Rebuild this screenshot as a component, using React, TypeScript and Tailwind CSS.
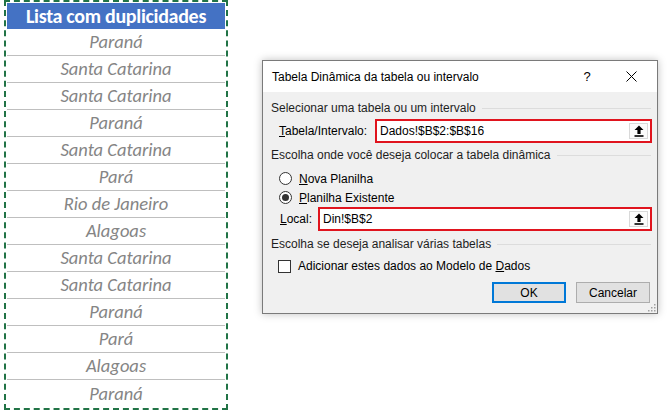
import React from "react";

const cities = [
  "Paraná",
  "Santa Catarina",
  "Santa Catarina",
  "Paraná",
  "Santa Catarina",
  "Pará",
  "Rio de Janeiro",
  "Alagoas",
  "Santa Catarina",
  "Santa Catarina",
  "Paraná",
  "Pará",
  "Alagoas",
  "Paraná",
];

const ui = { fontFamily: '"Segoe UI", "Liberation Sans", Arial, sans-serif' };
const sheet = { fontFamily: 'Calibri, Lato, "Liberation Sans", sans-serif' };

function UploadIcon() {
  return (
    <svg width="10" height="12" viewBox="0 0 10 12">
      <path d="M5 0.5 L9.5 5 H6.6 V9 H3.4 V5 H0.5 Z" fill="#000" />
      <rect x="0.5" y="10.2" width="9" height="1.6" fill="#000" />
    </svg>
  );
}

function RangeField({ value, width }: { value: string; width: string }) {
  return (
    <div className={`${width} h-[24px] border-2 border-[#e0141e] bg-white flex items-center`}>
      <div className="flex-1 pl-[3px] text-[12px] text-black leading-none">{value}</div>
      <div className="w-[19px] h-[16px] mr-[2px] border border-[#d9d9d9] bg-[#fbfbfb] flex items-center justify-center">
        <UploadIcon />
      </div>
    </div>
  );
}

function GroupTitle({ children }: { children: React.ReactNode }) {
  return (
    <div className="flex items-center gap-[6px] pr-[6px] h-[16px]">
      <span className="text-[12px] text-[#1e1e1e] whitespace-nowrap">{children}</span>
      <div className="flex-1 h-px bg-[#dcdcdc]" />
    </div>
  );
}

function Radio({ checked, children }: { checked?: boolean; children: React.ReactNode }) {
  return (
    <div className="flex items-center gap-[7px] h-[19px] pl-[8px]">
      <div className="w-[13px] h-[13px] rounded-full border border-[#333] bg-white flex items-center justify-center">
        {checked && <div className="w-[7px] h-[7px] rounded-full bg-[#333]" />}
      </div>
      <span className="text-[12px] text-black">{children}</span>
    </div>
  );
}

function SizeGrip() {
  const dots = [
    [8, 2],
    [5, 5],
    [8, 5],
    [2, 8],
    [5, 8],
    [8, 8],
  ];
  return (
    <svg width="10" height="10" viewBox="0 0 10 10">
      {dots.map(([x, y], i) => (
        <rect key={i} x={x} y={y} width="1.5" height="1.5" fill="#a0a0a0" />
      ))}
    </svg>
  );
}

export default function App() {
  return (
    <div className="w-[668px] h-[414px] bg-white flex items-start overflow-hidden">
      {/* Spreadsheet column */}
      <div
        className="ml-[4px] w-[224px] border-2 border-dashed border-[#217346] p-px flex flex-col"
        style={sheet}
      >
        <div className="h-[26px] bg-[#4472c4] flex items-center justify-center text-white font-bold text-[20px] tracking-[-0.3px] leading-none pb-[1px]">
          Lista com duplicidades
        </div>
        {cities.map((c, i) => (
          <div
            key={i}
            className={`h-[27px] flex items-center justify-center italic text-[18.5px] text-[#858585] ${
              i < cities.length - 1 ? "border-b border-[#bfbfbf]" : ""
            }`}
          >
            {c}
          </div>
        ))}
      </div>

      {/* PivotTable dialog */}
      <div
        className="relative ml-[34px] mt-[60px] w-[396px] h-[254px] border border-[#7a7a7a] bg-[#f0f0f0] flex flex-col shadow-[0_0_8px_rgba(0,0,0,0.25)]"
        style={ui}
      >
        <div className="h-[31px] bg-white flex items-center pl-[9px] text-[12px] text-black">
          <span className="flex-1">Tabela Dinâmica da tabela ou intervalo</span>
          <span className="w-[20px] text-center text-[13px] mr-[29px]">?</span>
          <svg width="11" height="11" viewBox="0 0 11 11" className="mr-[20px]">
            <path d="M0.5 0.5 L10.5 10.5 M10.5 0.5 L0.5 10.5" stroke="#000" strokeWidth="1" />
          </svg>
        </div>

        <div className="flex flex-col pl-[8px] pt-[8px]">
          <GroupTitle>Selecionar uma tabela ou um intervalo</GroupTitle>
          <div className="flex items-center mt-[3px] pl-[8px]">
            <span className="w-[96px] text-[12px] text-black">
              <span className="underline">T</span>abela/Intervalo:
            </span>
            <RangeField value="Dados!$B$2:$B$16" width="w-[277px]" />
          </div>

          <div className="mt-[4px]">
            <GroupTitle>Escolha onde você deseja colocar a tabela dinâmica</GroupTitle>
          </div>
          <div className="mt-[6px]">
            <Radio>
              <span className="underline">N</span>ova Planilha
            </Radio>
            <Radio checked>
              <span className="underline">P</span>lanilha Existente
            </Radio>
          </div>
          <div className="flex items-center pl-[9px]">
            <span className="w-[38px] text-[12px] text-black">
              <span className="underline">L</span>ocal:
            </span>
            <RangeField value="Din!$B$2" width="w-[334px]" />
          </div>

          <div className="mt-[5px]">
            <GroupTitle>Escolha se deseja analisar várias tabelas</GroupTitle>
          </div>
          <div className="flex items-center gap-[7px] pl-[7px] mt-[6px] h-[16px]">
            <div className="w-[13px] h-[13px] border border-[#333] bg-white" />
            <span className="text-[12px] text-black">
              Adicionar estes dados ao Modelo de <span className="underline">D</span>ados
            </span>
          </div>

          <div className="flex justify-end gap-[10px] pr-[7px] mt-[8px]">
            <button className="w-[74px] h-[21px] border-2 border-[#0078d7] bg-[#e1e1e1] text-[12px] text-black flex items-center justify-center">
              OK
            </button>
            <button className="w-[74px] h-[21px] border border-[#adadad] bg-[#e1e1e1] text-[12px] text-black flex items-center justify-center">
              Cancelar
            </button>
          </div>
        </div>

        <div className="absolute right-[1px] bottom-[1px]">
          <SizeGrip />
        </div>
      </div>
    </div>
  );
}
